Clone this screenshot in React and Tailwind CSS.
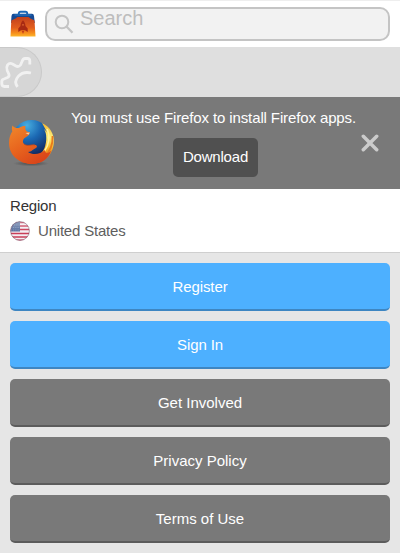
import React from "react";

function Briefcase() {
  return (
    <svg className="h-[28px] w-[28px] shrink-0" viewBox="0 0 28 28">
      <defs>
        <linearGradient id="bag" x1="0" y1="0" x2="0" y2="1">
          <stop offset="0" stopColor="#c2401c" />
          <stop offset="0.55" stopColor="#e25e1e" />
          <stop offset="0.8" stopColor="#f58a1c" />
          <stop offset="1" stopColor="#fdb62a" />
        </linearGradient>
      </defs>
      <path d="M8.800 6V4.500Q8.800 2.800 10.500 2.800H15.500Q17.200 2.800 17.200 4.500V6" fill="none" stroke="#1c69b8" strokeWidth="1.900" />
      <path d="M1.500 7Q1.700 4.800 3.500 4.800H22Q23.800 4.800 24 7L24.800 14H1Z" fill="#164a94" />
      <path d="M4.500 6H21.500" stroke="#2677c4" strokeWidth="1.200" />
      <path d="M1.300 11.500L5.500 9.500L7.500 8H18.500L20.500 9.500L24.500 11.500L25.500 27.500H.5Z" fill="url(#bag)" />
      <path d="M13 11.200C14.700 12.800 15.400 14.800 15.500 17L17.700 19.500V23L15 21.200H11L8.300 23V19.500L10.500 17C10.600 14.800 11.300 12.800 13 11.200Z" fill="#a82a13" />
      <rect x="12.200" y="15" width="1.600" height="1.800" rx=".8" fill="#e26a32" />
      <path d="M11.800 22H14.200L13 25Z" fill="#c53c16" />
    </svg>
  );
}

function Firefox() {
  return (
    <svg className="h-[50px] w-[50px]" viewBox="0 0 50 50">
      <defs>
        <radialGradient id="globe" cx=".38" cy=".14" r=".8">
          <stop offset="0" stopColor="#48aee0" />
          <stop offset=".45" stopColor="#1b68b3" />
          <stop offset="1" stopColor="#10265c" />
        </radialGradient>
        <linearGradient id="fox" x1="0" y1="0" x2=".7" y2="1">
          <stop offset="0" stopColor="#f0882c" />
          <stop offset=".5" stopColor="#e8651e" />
          <stop offset="1" stopColor="#d8431a" />
        </linearGradient>
        <linearGradient id="flame" x1="0" y1="0" x2="0" y2="1">
          <stop offset="0" stopColor="#f5b52d" />
          <stop offset=".35" stopColor="#fff07a" />
          <stop offset=".6" stopColor="#f8b829" />
          <stop offset="1" stopColor="#df4c19" />
        </linearGradient>
        <radialGradient id="shade">
          <stop offset="0" stopColor="#333" stopOpacity=".65" />
          <stop offset="1" stopColor="#333" stopOpacity="0" />
        </radialGradient>
      </defs>
      <ellipse cx="26" cy="46.500" rx="18" ry="2.800" fill="url(#shade)" />
      <circle cx="26.500" cy="22.500" r="19.500" fill="url(#globe)" />
      <path d="M37 6C44.500 9.500 49.500 16.500 48.800 26C48 38 38 47 27 47C21 47 15 44 12 40C24 44.500 36 40 39.500 31C42 24 42 17 39 12L42 15Z" fill="url(#flame)" />
      <path d="M42 12C45.500 19 44 28 39.500 34" fill="none" stroke="#fff5a0" strokeWidth="1.600" />
      <path d="M47.500 19C48 28 45 35 39 40" fill="none" stroke="#e97a1d" strokeWidth="1.800" />
      <path d="M7.500 8.500C9 10.500 11 11.200 14 11C16.500 9.200 18.500 8.800 20.500 9C19.800 11.500 20.500 13.500 22 14.500L25 15.500C24.500 18 22 19.500 19 21.500C17.500 23.500 17.500 25.500 19 27C23 30 27 27 30 28C32.500 28 32.500 30.500 30.500 31.200C28 32 27 34.800 23 35C28 38.500 35 37.500 40 33C40 37.500 44 36.500 46.500 33C43.500 42 36 47 27 47C14 47 4 38 4 26C4 20.500 5.500 17 7.300 14.500C6.800 12.500 6.700 10.500 7.500 8.500Z" fill="url(#fox)" />
      <path d="M20.500 16L24.800 15.600L23.500 17.700Z" fill="#f8c99c" />
      <path d="M19 27C23 30 27 27 30 28" fill="none" stroke="#b84620" strokeWidth=".8" />
    </svg>
  );
}

function Flag() {
  return (
    <svg className="h-5 w-5" viewBox="0 0 20 20">
      <defs>
        <clipPath id="disc"><circle cx="10" cy="10" r="9.500" /></clipPath>
        <linearGradient id="gloss" x1="0" y1="0" x2="0" y2="1">
          <stop offset="0" stopColor="#fff" stopOpacity=".35" />
          <stop offset="1" stopColor="#fff" stopOpacity="0" />
        </linearGradient>
      </defs>
      <g clipPath="url(#disc)">
        <rect width="20" height="20" fill="#f3edf2" />
        <path d="M0 1.500H20M0 5H20M0 8.500H20M0 12.500H20M0 16H20M0 19.300H20" stroke="#c93e58" strokeWidth="1.600" />
        <rect width="10" height="10.500" fill="#5a719f" />
        <path d="M2 4H10M1 6.500H10M1 9H10" stroke="#a8b7d4" strokeWidth=".6" strokeDasharray="1 1.200" />
        <rect width="20" height="10" fill="url(#gloss)" />
      </g>
      <circle cx="10" cy="10" r="9.400" fill="none" stroke="#745467" strokeWidth=".8" opacity=".65" />
    </svg>
  );
}

const links = [
  ["Register", true],
  ["Sign In", true],
  ["Get Involved", false],
  ["Privacy Policy", false],
  ["Terms of Use", false],
];

export default function App() {
  return (
    <div className="h-[553px] w-full overflow-hidden bg-[#e6e6e6] text-[15px] leading-5" style={{ fontFamily: '"Liberation Sans", Arial, sans-serif' }}>
      <header className="flex h-[47px] gap-[7px] border-t border-[#eee] bg-white px-[10px] pt-[6px]">
        <div className="w-7 pt-[2px]"><Briefcase /></div>
        <div className="flex h-[34px] flex-1 rounded-[10px] border-2 border-[#c4c4c4] bg-[#f2f2f2] pl-[7px]">
          <svg className="mt-[5px] h-5 w-5 shrink-0" viewBox="0 0 20 20" fill="none" stroke="#c4c4c4" strokeWidth="2">
            <circle cx="8" cy="8" r="6.300" />
            <path d="M12.500 12.500L18.500 18.800" strokeWidth="2.300" />
          </svg>
          <span className="-mt-[2px] ml-[6px] text-[20px] leading-[23px] text-[#bdbdbd]">Search</span>
        </div>
      </header>

      <div className="h-[50px] bg-[#dfdfdf]">
        <div className="h-[50px] w-[42px] overflow-hidden rounded-r-[25px] border-y border-r border-[#c9c9c9] bg-[#d6d6d6]">
          <svg className="mt-[8px] h-[32px] w-[32px]" viewBox="0 0 32 32" fill="none" stroke="#f1f1f1" strokeWidth="2.800">
            <path d="M9 30.500H4.500Q1.800 30.300 1.800 27.500V25.500Q1.800 23.500 4 23L7.500 21.500Q9.800 20.300 8.800 18L7.200 14.500Q6 11.500 7.500 9Q9.500 6.500 12.500 8L15.500 9.800Q18.500 11.500 20.500 9L22 5.500Q23 2.500 25 2.500H27.500Q29.800 2.500 29.800 5V8.500" />
            <path d="M17.500 30.800C12.500 24 20 14.500 31 17" />
          </svg>
        </div>
      </div>

      <section className="flex h-[92px] bg-[#797979] text-white">
        <div className="w-[60px] pt-[20px] pl-[5px]"><Firefox /></div>
        <div className="flex w-[310px] shrink-0 flex-col items-center pl-[1px]">
          <p className="mt-[11px] -ml-[4px] whitespace-nowrap tracking-[-0.12px]">You must use Firefox to install Firefox apps.</p>
          <button className="mt-[10px] h-[39px] w-[85px] rounded-[5px] bg-[#505050] pb-[2px] tracking-[-0.2px]">Download</button>
        </div>
        <svg className="mt-[37px] -ml-[9px] h-[18px] w-[18px]" viewBox="0 0 18 18">
          <path d="M2.300 2.300L15.700 15.700M15.700 2.300L2.300 15.700" stroke="#cbcbcb" strokeWidth="3.500" strokeLinecap="round" />
        </svg>
      </section>

      <section className="h-[64px] border-b border-[#cfcfcf] bg-white px-[10px] pt-[7px]">
        <h2 className="tracking-[-0.2px] text-[#333]">Region</h2>
        <div className="mt-[5px] flex items-center gap-2 tracking-[-0.2px] text-[#5e5e5e]">
          <Flag />
          <span>United States</span>
        </div>
      </section>

      <nav className="flex flex-col gap-[10px] px-[10px] pt-[10px] text-white">
        {links.map(([label, primary]) => (
          <button
            key={label}
            className={"h-12 rounded-[5px] border-b-2 pt-[2px] " + (primary ? "border-[#3e86c2] bg-[#4db0ff] tracking-[-0.1px]" : "border-[#5c5c5c] bg-[#797979]")}
          >
            {label}
          </button>
        ))}
      </nav>
    </div>
  );
}
